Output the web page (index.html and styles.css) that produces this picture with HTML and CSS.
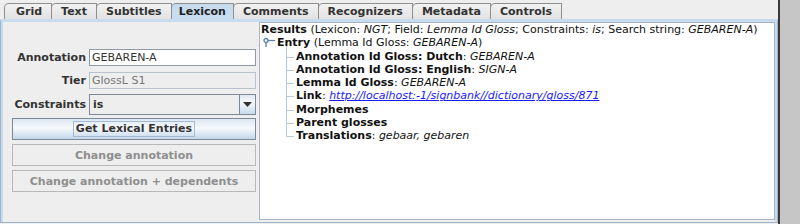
FILE: index.html
```html
<!DOCTYPE html>
<html>
<head>
<meta charset="utf-8">
<link rel="stylesheet" href="styles.css">
</head>
<body>
<div class="window">
  <div class="tabpane">
    <div class="tabs">
      <div class="tab first">Grid</div>
      <div class="tab">Text</div>
      <div class="tab">Subtitles</div>
      <div class="tab selected">Lexicon</div>
      <div class="tab">Comments</div>
      <div class="tab">Recognizers</div>
      <div class="tab">Metadata</div>
      <div class="tab">Controls</div>
    </div>
    <div class="content">
      <div class="left">
        <div class="form">
          <div class="row">
            <label class="lbl">Annotation</label>
            <div class="field">GEBAREN-A</div>
          </div>
          <div class="row">
            <label class="lbl">Tier</label>
            <div class="field disabled">GlossL S1</div>
          </div>
          <div class="row">
            <label class="lbl">Constraints</label>
            <div class="combo">
              <span class="combo-text">is</span>
              <span class="combo-btn"><svg width="9" height="5" viewBox="0 0 9 5"><path d="M0 0 H9 L4.5 5 Z" fill="#333"/></svg></span>
            </div>
          </div>
        </div>
        <div class="buttons">
          <div class="btn primary"><span class="focus">Get Lexical Entries</span></div>
          <div class="btn off">Change annotation</div>
          <div class="btn off">Change annotation + dependents</div>
        </div>
      </div>
      <div class="results">
        <div class="line"><b>Results</b> (Lexicon: <i>NGT</i>; Field: <i>Lemma Id Gloss</i>; Constraints: <i>is</i>; Search string: <i>GEBAREN-A</i>)</div>
        <div class="line entry"><svg class="handle" width="14" height="13" viewBox="0 0 14 13"><circle cx="4" cy="4.5" r="2" fill="none" stroke="#5b7fb0" stroke-width="1.3"/><line x1="6" y1="4.5" x2="13" y2="4.5" stroke="#5b7fb0" stroke-width="1.2"/><line x1="4" y1="6.5" x2="4" y2="11" stroke="#5b7fb0" stroke-width="1.3"/></svg><b>Entry</b> (Lemma Id Gloss: <i>GEBAREN-A</i>)</div>
        <div class="children">
          <div class="line child"><b>Annotation Id Gloss: Dutch</b>: <i>GEBAREN-A</i></div>
          <div class="line child"><b>Annotation Id Gloss: English</b>: <i>SIGN-A</i></div>
          <div class="line child"><b>Lemma Id Gloss</b>: <i>GEBAREN-A</i></div>
          <div class="line child"><b>Link</b>: <a class="link">http://localhost:-1/signbank//dictionary/gloss/871</a></div>
          <div class="line child"><b>Morphemes</b></div>
          <div class="line child"><b>Parent glosses</b></div>
          <div class="line child"><b>Translations</b>: <i>gebaar, gebaren</i></div>
        </div>
      </div>
    </div>
  </div>
  <div class="divider"></div>
  <div class="outside"></div>
</div>
</body>
</html>
```

FILE: styles.css
```css
html, body {
  margin: 0;
  padding: 0;
  background: #eeeeee;
}
body {
  font-family: "DejaVu Sans", sans-serif;
  font-size: 11px;
  color: #000;
}
.window {
  display: flex;
  width: 800px;
  height: 224px;
}
.tabpane {
  width: 778px;
  display: flex;
  flex-direction: column;
  padding-top: 3px;
  box-sizing: border-box;
  height: 223px;
}
.tabs {
  display: flex;
  padding-left: 4px;
  height: 16px;
}
.tab {
  font-weight: bold;
  color: #333;
  padding: 0 9px;
  line-height: 15px;
  border: 1px solid #8e8f8f;
  border-bottom: none;
  border-top-left-radius: 5px;
  background: linear-gradient(#f2f2f2, #e2e2e2);
  margin-right: -1px;
}
.tab.first {
  padding-left: 11px;
}
.tab.selected {
  background: #c8dcf0;
  color: #222;
  padding: 0 7px;
}
.content {
  flex: 1;
  display: flex;
  border: 1px solid #9fb3c8;
  border-top: 3px solid #c8dcf0;
  box-shadow: inset 2px 0 0 #c8dcf0, inset -2px 0 0 #c8dcf0;
  padding: 0 2px 2px 2px;
}
.left {
  width: 253px;
  display: flex;
  flex-direction: column;
  padding-top: 27px;
  box-sizing: border-box;
}
.form {
  display: flex;
  flex-direction: column;
  gap: 5px;
}
.row {
  display: flex;
  align-items: center;
  gap: 3px;
}
.lbl {
  width: 83px;
  text-align: right;
  font-weight: bold;
  color: #333;
}
.field {
  flex: 1;
  height: 15px;
  line-height: 15px;
  border: 1px solid #8e9aa6;
  background: #fff;
  padding-left: 2px;
  color: #333;
}
.field.disabled {
  background: #eeeeee;
  border-color: #b8c3ce;
  color: #777;
  height: 15px;
  margin-top: 1px;
}
.combo {
  flex: 1;
  height: 19px;
  border: 1px solid #7a8a99;
  display: flex;
  background: #eeeeee;
}
.combo-text {
  flex: 1;
  font-weight: bold;
  line-height: 19px;
  padding-left: 3px;
  color: #333;
}
.combo-btn {
  width: 15px;
  border-left: 1px solid #7a8a99;
  background: linear-gradient(#dde8f3, #f6f9fc 40%, #c8daec);
  display: flex;
  align-items: center;
  justify-content: center;
}
.buttons {
  display: flex;
  flex-direction: column;
  gap: 4px;
  margin-top: 3px;
  margin-left: 9px;
}
.btn {
  height: 22px;
  box-sizing: border-box;
  display: flex;
  align-items: center;
  justify-content: center;
  font-weight: bold;
  border: 1px solid #8e9aa6;
}
.btn.primary {
  background: linear-gradient(#dde8f3, #f6f9fc 45%, #c3d6ea);
  border-color: #7a8a99;
  color: #333;
}
.focus {
  border: 1px solid #a3bbd6;
  padding: 0 2px;
  line-height: 14px;
}
.btn.off {
  background: #eeeeee;
  border-color: #b8b8b8;
  color: #8e8e8e;
}
.results {
  flex: 1;
  margin: 0 0 0 3px;
  background: #fff;
  border: 1px solid #a8b4c0;
  padding: 0 0 0 1px;
}
.line {
  height: 13.3px;
  line-height: 13.3px;
  white-space: nowrap;
  color: #111;
}
.entry {
  padding-left: 1px;
}
.handle {
  vertical-align: -3px;
  margin-right: 1px;
}
.children {
  position: relative;
  margin-left: 25px;
}
.children::before {
  content: "";
  position: absolute;
  left: 0;
  top: -4px;
  height: 91px;
  border-left: 1px solid #b9c9da;
}
.child {
  position: relative;
  padding-left: 10px;
}
.child::before {
  content: "";
  position: absolute;
  left: 0;
  top: 7px;
  width: 8px;
  border-top: 1px solid #b9c9da;
}
.link {
  color: #1a1aff;
  text-decoration: underline;
  font-style: italic;
}
.divider {
  width: 2px;
  background: #3a3a3a;
}
.outside {
  flex: 1;
  background: #c6c6c6;
}
```
